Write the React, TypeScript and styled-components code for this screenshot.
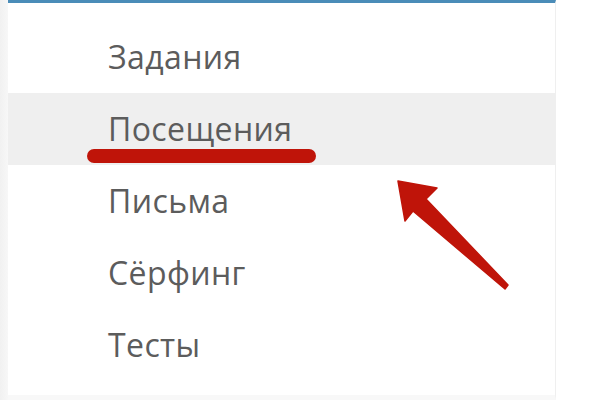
import React from "react";
import styled, { createGlobalStyle } from "styled-components";

const Global = createGlobalStyle`
  html, body { margin: 0; padding: 0; background: #ffffff; }
  body { font-family: "Open Sans", "Noto Sans", sans-serif; }
`;

const Page = styled.div`
  position: relative;
  width: 600px;
  height: 400px;
  display: flex;
  background: #ffffff;
  overflow: hidden;
`;

const Gutter = styled.div`
  width: 8px;
  height: 400px;
  background: linear-gradient(to right, #f1f1f1, #f7f7f7);
`;

const Panel = styled.nav`
  width: 548px;
  height: 400px;
  background: #ffffff;
  border-top: 3px solid #4a8cb8;
  border-right: 1px solid #efefef;
  border-bottom: 5px solid #f8f8f8;
  padding-top: 18px;
  box-sizing: border-box;
  display: flex;
  flex-direction: column;
`;

const Item = styled.div<{ $active?: boolean }>`
  height: 72px;
  line-height: 72px;
  padding-left: 100px;
  font-size: 32px;
  letter-spacing: 0.4px;
  color: #5c5c5c;
  background: ${(p) => (p.$active ? "#efefef" : "transparent")};
`;

const Underline = styled.div`
  position: absolute;
  left: 87px;
  top: 149px;
  width: 229px;
  height: 14px;
  border-radius: 7px;
  background: #bf1409;
`;

const Arrow = styled.svg`
  position: absolute;
  left: 0;
  top: 0;
  width: 600px;
  height: 400px;
  pointer-events: none;
`;

const items = ["Задания", "Посещения", "Письма", "Сёрфинг", "Тесты"];

export default function App() {
  return (
    <>
      <Global />
      <Page>
        <Gutter />
        <Panel>
          {items.map((t, i) => (
            <Item key={t} $active={i === 1}>
              {t}
            </Item>
          ))}
        </Panel>
        <Underline />
        <Arrow viewBox="0 0 600 400">
          <polygon
            points="398,181 437,188 426,199 508,285 505,289 413,211 405,221"
            fill="#bf1409"
            stroke="#bf1409"
            strokeWidth="1.5"
            strokeLinejoin="round"
          />
        </Arrow>
      </Page>
    </>
  );
}
